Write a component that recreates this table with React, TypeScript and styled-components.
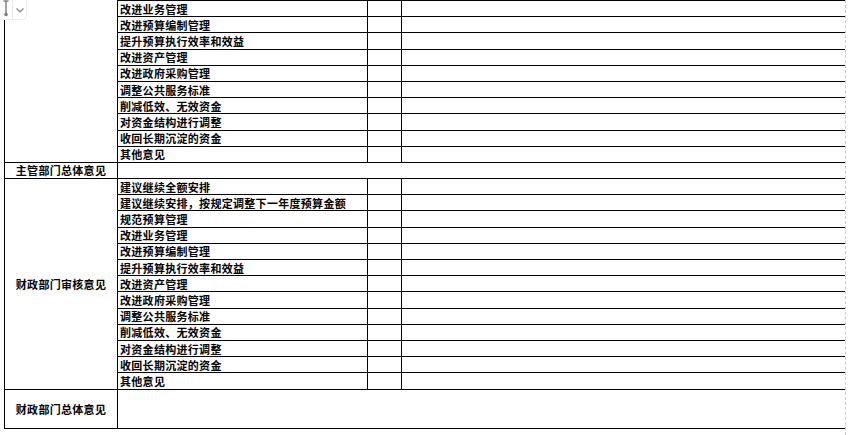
import React from "react";
import styled, { createGlobalStyle } from "styled-components";

const Global = createGlobalStyle`
  html, body { margin: 0; padding: 0; background: #fff; }
  body { font-family: "Noto Sans CJK SC", "Noto Sans", sans-serif; }
`;

const Page = styled.div`
  position: relative;
  width: 846px;
  height: 435px;
  box-sizing: border-box;
  padding-left: 4px;
  border-right: 1px dashed #c9c9c9;
  overflow: hidden;
`;

const Sheet = styled.div`
  display: grid;
  grid-template-columns: 113px 250px 34px 444px;
  grid-template-rows: repeat(24, 16.2px) 39.4px;
  border-bottom: 1px solid #000;
  width: 841px;
`;

const Cell = styled.div<{ $noTop?: boolean; $rows?: number; $cols?: number; $center?: boolean }>`
  box-sizing: border-box;
  border-left: 1px solid #000;
  border-top: ${(p) => (p.$noTop ? "none" : "1px solid #000")};
  grid-row: ${(p) => (p.$rows ? `span ${p.$rows}` : "auto")};
  grid-column: ${(p) => (p.$cols ? `span ${p.$cols}` : "auto")};
  display: flex;
  align-items: center;
  justify-content: ${(p) => (p.$center ? "center" : "flex-start")};
  padding-left: ${(p) => (p.$center ? "0" : "2px")};
  font-size: 11px;
  font-weight: 700;
  color: #000;
  white-space: nowrap;
  overflow: hidden;
  line-height: 14px;
  letter-spacing: 0.3px;
`;

const Handle = styled.div`
  position: absolute;
  left: 0;
  top: 0;
  width: 27px;
  height: 20px;
  box-sizing: border-box;
  background: #fff;
  border: 1px solid #ebebeb;
  border-top: none;
  border-left: none;
  border-bottom-right-radius: 5px;
  display: flex;
  align-items: flex-start;
`;

const Grip = styled.div`
  width: 12px;
  height: 19px;
  display: flex;
  justify-content: center;
`;

const Chevron = styled.div`
  flex: 1;
  height: 19px;
  border-left: 1px solid #e6e6e6;
  display: flex;
  align-items: center;
  justify-content: center;
`;

const topItems = [
  "改进业务管理",
  "改进预算编制管理",
  "提升预算执行效率和效益",
  "改进资产管理",
  "改进政府采购管理",
  "调整公共服务标准",
  "削减低效、无效资金",
  "对资金结构进行调整",
  "收回长期沉淀的资金",
  "其他意见",
];

const reviewItems = [
  "建议继续全额安排",
  "建议继续安排，按规定调整下一年度预算金额",
  "规范预算管理",
  ...topItems,
];

function ItemRows({ items }: { items: string[] }) {
  return (
    <>
      {items.map((t, i) => (
        <React.Fragment key={i}>
          <Cell>{t}</Cell>
          <Cell />
          <Cell />
        </React.Fragment>
      ))}
    </>
  );
}

export default function App() {
  return (
    <>
      <Global />
      <Page>
        <Sheet>
          <Cell $noTop $rows={topItems.length} />
          <ItemRows items={topItems} />
          <Cell $center>主管部门总体意见</Cell>
          <Cell $cols={3} />
          <Cell $center $rows={reviewItems.length}>财政部门审核意见</Cell>
          <ItemRows items={reviewItems} />
          <Cell $center>财政部门总体意见</Cell>
          <Cell $cols={3} />
        </Sheet>
        <Handle>
          <Grip>
            <svg width="8" height="18" viewBox="0 0 8 18">
              <line x1="1.5" y1="1" x2="6.5" y2="1" stroke="#7a7a7a" strokeWidth="1.4" />
              <line x1="4" y1="1" x2="4" y2="14" stroke="#7a7a7a" strokeWidth="1.4" />
              <circle cx="4" cy="14.5" r="1.8" fill="#7a7a7a" />
            </svg>
          </Grip>
          <Chevron>
            <svg width="10" height="8" viewBox="0 0 10 8">
              <polyline points="1.5,2.5 5,5.8 8.5,2.5" fill="none" stroke="#8a8a8a" strokeWidth="1.3" />
            </svg>
          </Chevron>
        </Handle>
      </Page>
    </>
  );
}
